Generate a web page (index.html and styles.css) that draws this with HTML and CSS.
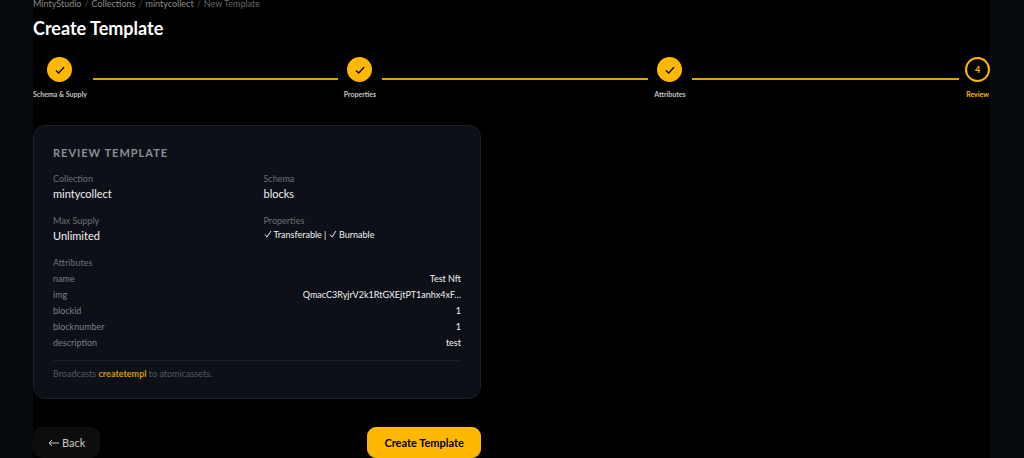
FILE: index.html
```html
<!DOCTYPE html>
<html lang="en">
  <head>
    <meta charset="utf-8">
    <title>Create Template</title>
    <link rel="stylesheet" href="styles.css">
  </head>
  <body>
    <main class="content">
      <nav class="breadcrumb">
        <a href="#">MintyStudio</a><span>/</span>
        <a href="#">Collections</a><span>/</span>
        <a href="#">mintycollect</a><span>/</span>
        <span class="current">New Template</span>
      </nav>
      <h1>Create Template</h1>

      <ol class="stepper">
        <li class="step-item">
          <div class="step">
            <div class="circle"><svg viewBox="0 0 12 12"><path d="M2 6.5l2.6 2.6L10 3.2"/></svg></div>
            <span>Schema &amp; Supply</span>
          </div>
          <div class="line"></div>
        </li>
        <li class="step-item">
          <div class="step">
            <div class="circle"><svg viewBox="0 0 12 12"><path d="M2 6.5l2.6 2.6L10 3.2"/></svg></div>
            <span>Properties</span>
          </div>
          <div class="line"></div>
        </li>
        <li class="step-item">
          <div class="step">
            <div class="circle"><svg viewBox="0 0 12 12"><path d="M2 6.5l2.6 2.6L10 3.2"/></svg></div>
            <span>Attributes</span>
          </div>
          <div class="line"></div>
        </li>
        <li class="step-item">
          <div class="step active">
            <div class="circle">4</div>
            <span>Review</span>
          </div>
        </li>
      </ol>

      <div class="panel">
        <section class="card">
          <h2>REVIEW TEMPLATE</h2>
          <dl class="summary">
            <div>
              <dt>Collection</dt>
              <dd>mintycollect</dd>
            </div>
            <div>
              <dt>Schema</dt>
              <dd>blocks</dd>
            </div>
            <div>
              <dt>Max Supply</dt>
              <dd>Unlimited</dd>
            </div>
            <div>
              <dt>Properties</dt>
              <dd class="flags">
                <svg viewBox="0 0 8 8"><path d="M1 4.5l2 2.5L7 1"/></svg>
                Transferable |
                <svg viewBox="0 0 8 8"><path d="M1 4.5l2 2.5L7 1"/></svg>
                Burnable
              </dd>
            </div>
          </dl>
          <h3>Attributes</h3>
          <dl class="attributes">
            <div><dt>name</dt><dd>Test Nft</dd></div>
            <div><dt>img</dt><dd>QmacC3RyjrV2k1RtGXEjtPT1anhx4xF…</dd></div>
            <div><dt>blockid</dt><dd>1</dd></div>
            <div><dt>blocknumber</dt><dd>1</dd></div>
            <div><dt>description</dt><dd>test</dd></div>
          </dl>
          <p class="note">Broadcasts <strong>createtempl</strong> to atomicassets.</p>
        </section>

        <div class="actions">
          <button type="button" class="back"><svg viewBox="0 0 11 8"><path d="M11 4H1M4 1L1 4l3 3"/></svg>Back</button>
          <button type="button" class="create">Create Template</button>
        </div>
      </div>
    </main>
  </body>
</html>
```

FILE: styles.css
```css
* {
  box-sizing: border-box;
}
body {
  margin: 0;
  padding: 0 34px 0 33px;
  background-color: #06090d;
  color: #f2f2f2;
  font-family: Lato, sans-serif;
  font-size: 9px;
  line-height: 12px;
}
h1, h2, h3, p, ol, dl, dd {
  margin: 0;
  padding: 0;
}
svg {
  fill: none;
  stroke: currentColor;
}
.content {
  min-height: 100vh;
  background-color: #000;
}
.breadcrumb {
  display: flex;
  gap: 3px;
  line-height: 8px;
  color: #4a4a4a;
}
.breadcrumb a {
  color: #8c8c8c;
  text-decoration: none;
}
.breadcrumb .current {
  color: #686868;
}
h1 {
  margin-top: 8px;
  font-size: 18px;
  line-height: 24px;
  color: #fff;
}
.stepper {
  display: flex;
  margin-top: 17px;
  list-style: none;
}
.step-item {
  display: flex;
  flex: 1;
  align-items: center;
}
.step-item:last-child {
  flex: none;
}
.step {
  display: flex;
  flex-direction: column;
  align-items: center;
  gap: 6px;
  font-size: 7px;
  font-weight: bold;
  color: #c4c4c4;
}
.circle {
  display: flex;
  align-items: center;
  justify-content: center;
  width: 25px;
  height: 25px;
  border: 2px solid #ffb800;
  border-radius: 50%;
  background-color: #ffb800;
  color: #000;
}
.circle svg {
  width: 12px;
  height: 12px;
  stroke-width: 1.4;
}
.active {
  color: #ffb800;
}
.active .circle {
  background-color: #000;
  color: #ffb800;
  font-size: 9px;
}
.line {
  flex: 1;
  height: 2px;
  margin: 0 6px;
  background-color: #e0a200;
}
.panel {
  max-width: 448px;
  margin-top: 25px;
}
.card {
  padding: 19px 19px 18px;
  border: 1px solid #191f26;
  border-radius: 12px;
  background-color: #0d1117;
}
h2 {
  margin-bottom: 12px;
  font-size: 11px;
  line-height: 16px;
  letter-spacing: 1px;
  color: #8d8f92;
}
.summary {
  display: grid;
  grid-template-columns: 1fr 1fr;
  gap: 13px;
}
dt, h3 {
  font-size: 9px;
  font-weight: normal;
  color: #6c6f73;
}
.summary dd {
  margin-top: 1px;
  font-size: 11px;
  line-height: 16px;
}
.summary .flags {
  font-size: 9px;
  line-height: 14px;
}
.flags svg {
  width: 8px;
  height: 8px;
}
h3 {
  margin-top: 13px;
}
.attributes {
  display: grid;
  gap: 4px;
  margin-top: 4px;
}
.attributes div {
  display: flex;
  justify-content: space-between;
}
.attributes dt {
  color: #7c7f83;
}
.note {
  margin-top: 11px;
  padding-top: 7px;
  border-top: 1px solid #1b2027;
  color: #56595d;
}
.note strong {
  color: #d19a07;
}
.actions {
  display: flex;
  justify-content: space-between;
  margin-top: 28px;
}
button {
  display: flex;
  align-items: center;
  gap: 3px;
  padding: 8px 14px;
  border: 1px solid #0d0d0d;
  border-radius: 9px;
  font-family: inherit;
  font-size: 11px;
  line-height: 13px;
}
.back {
  background-color: #0d0d0d;
  color: #c9c9c9;
}
.back svg {
  width: 11px;
  height: 8px;
}
.create {
  padding: 8px 16px;
  border-color: #ffb800;
  background-color: #ffb800;
  color: #000;
  font-weight: bold;
}
```
